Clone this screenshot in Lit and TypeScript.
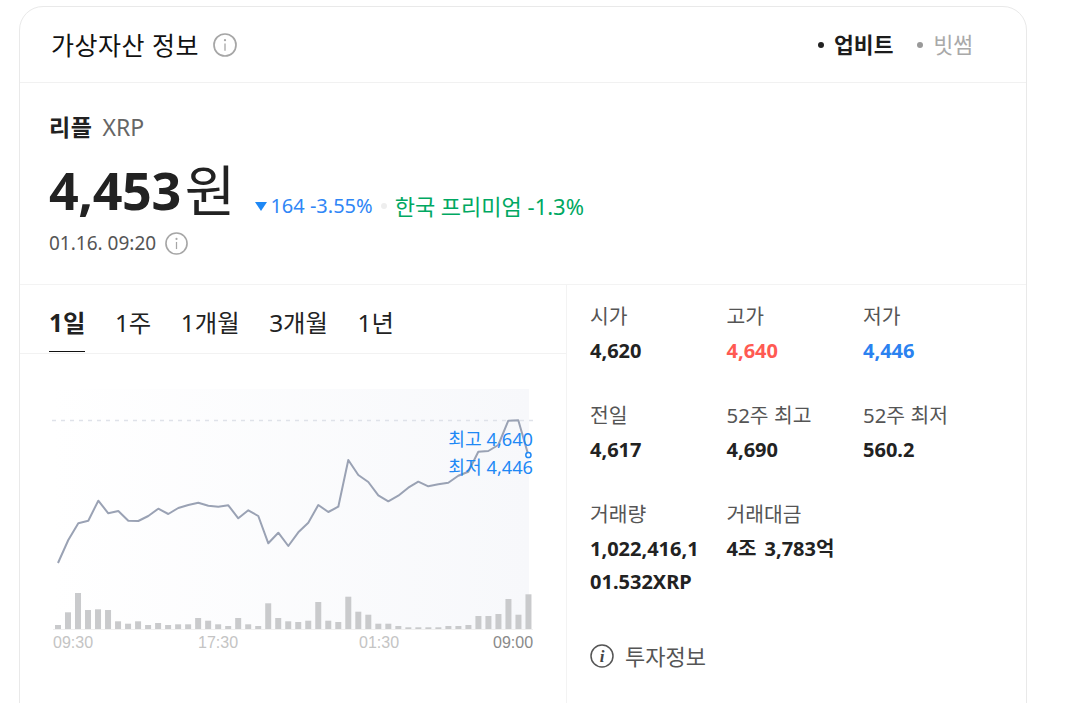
import { LitElement, html, css, svg } from "lit";
import { customElement } from "lit/decorators.js";

const LINE: [number, number][] = [
  [58, 563], [68.3, 540], [78.3, 523.3], [88.3, 520.7], [98.3, 500.7], [108.3, 513.3], [118.3, 511], [128.3, 520.7],
  [138.3, 521], [148.3, 516], [158.3, 508.7], [168.3, 514], [178.3, 508], [188.3, 505], [198.3, 502.7], [208.3, 505.7],
  [218.3, 506.7], [228.3, 505.3], [238.3, 518.3], [248.3, 510.3], [258.3, 516], [268.3, 543.3], [278.3, 532.7], [288.3, 546],
  [298.3, 532.3], [308.3, 522.7], [318.3, 505], [328.3, 512], [338.3, 506.7], [348.3, 460], [358.3, 475], [368.3, 482],
  [378.3, 495.3], [388.3, 501.3], [398.3, 495.7], [408.3, 487.7], [418.3, 481.7], [428.3, 486.3], [438.3, 484.3], [448.3, 482.7],
  [458.3, 475.7], [468.3, 471.7], [478.3, 451.7], [488.3, 451], [498.3, 445], [508.3, 420.7], [518.3, 420.3], [528.3, 455],
];
const BARS = [4, 16.7, 36, 19, 19.7, 19, 7.7, 5.3, 7.7, 4, 6, 4, 4.7, 4.7, 11, 8.3, 4.7, 3, 11, 4.7, 3, 25.7, 11, 7.7, 7, 8.3, 27, 8.3, 7, 32.3, 17.3, 14.3, 5.3, 5.3, 3, 1.7, 1.7, 1.7, 1.7, 3, 3, 4, 13, 13, 15, 30, 14.3, 34.7];

const STATS = [
  { label: "시가", value: "4,620" },
  { label: "고가", value: "4,640", tone: "up" },
  { label: "저가", value: "4,446", tone: "down" },
  { label: "전일", value: "4,617" },
  { label: "52주 최고", value: "4,690" },
  { label: "52주 최저", value: "560.2" },
  { label: "거래량", value: "1,022,416,101.532XRP" },
  { label: "거래대금", value: "4조 3,783억" },
];

const infoIcon = (size: number) => html`<svg class="info" width=${size} height=${size} viewBox="0 0 24 24" fill="none">
  <circle cx="12" cy="12" r="11" stroke="#a6a6a6" stroke-width="1.7"></circle>
  <circle cx="12" cy="7.2" r="1.1" fill="#a6a6a6"></circle>
  <path d="M12 10.4V17.8" stroke="#a6a6a6" stroke-width="1.3"></path>
</svg>`;

@customElement("app-root")
export class AppRoot extends LitElement {
  static styles = css`
    :host {
      display: block;
      height: 703px;
      overflow: hidden;
      background: #fff;
      font-family: "Noto Sans", "Noto Sans CJK KR", sans-serif;
      color: #222;
    }
    .card {
      box-sizing: border-box;
      width: 1008px;
      height: 760px;
      margin: 6px 0 0 19px;
      border: 1px solid #e9e9e9;
      border-radius: 24px;
    }
    .head {
      box-sizing: border-box;
      height: 76px;
      display: flex;
      align-items: center;
      padding: 0 53px 0 31px;
      border-bottom: 1px solid #f1f1f1;
    }
    .title {
      font-size: 25px;
      letter-spacing: 0.5px;
      line-height: 30px;
      color: #111;
    }
    .info { display: block; flex: none; }
    .head .info { margin-left: 14px; }
    .sources {
      margin-left: auto;
      display: flex;
      align-items: center;
      font-size: 21.5px;
      line-height: 26px;
      color: #a9a9a9;
    }
    .src { display: flex; align-items: center; gap: 10px; }
    .src + .src { margin-left: 24px; }
    .src i { width: 6px; height: 6px; border-radius: 50%; background: #999; }
    .src.on { color: #1c1c1c; font-weight: 700; }
    .src.on i { background: #222; }
    .summary {
      box-sizing: border-box;
      height: 202px;
      padding: 29px 29px 0;
      border-bottom: 1px solid #f3f3f3;
    }
    .name { font-size: 23px; line-height: 30px; color: #666; }
    .name b { color: #222; margin-right: 4px; letter-spacing: 0.6px; }
    .price-row { display: flex; align-items: flex-end; margin-top: 18px; height: 60px; }
    .num { font-size: 52px; line-height: 60px; font-weight: 700; letter-spacing: -0.4px; color: #222; }
    .won { font-size: 55px; line-height: 60px; margin-left: 4px; color: #222; }
    .delta {
      display: flex;
      align-items: center;
      font-size: 20px;
      line-height: 28px;
      margin: 0 0 0 20px;
      color: #2f86f6;
    }
    .tri { width: 0; height: 0; border: 6.5px solid transparent; border-top: 9px solid #1e88f5; border-bottom: 0; margin-right: 3px; }
    .sep { width: 6px; height: 6px; border-radius: 50%; background: #eee; margin: 0 8px; }
    .premium { color: #00a862; font-size: 22px; }
    .date-row {
      display: flex;
      align-items: center;
      gap: 9px;
      font-size: 19px;
      line-height: 24px;
      color: #555;
      margin-top: 11px;
    }
    .body { display: flex; }
    .left { width: 546px; flex: none; border-right: 1px solid #f3f3f3; min-height: 470px; }
    .tabs {
      box-sizing: border-box;
      height: 69px;
      display: flex;
      gap: 29.5px;
      padding-left: 29px;
      border-bottom: 1px solid #f2f2f2;
    }
    .tab {
      box-sizing: border-box;
      height: 67px;
      padding-top: 21px;
      font-size: 24.4px;
      line-height: 34px;
      color: #222;
    }
    .tab.on { font-weight: 700; border-bottom: 1px solid #111; }
    .chart { display: block; width: 546px; height: 350px; }
    .right { padding: 14px 0 0 23px; flex: 1; }
    .grid {
      display: grid;
      grid-template-columns: repeat(3, 136.5px);
      row-gap: 31px;
    }
    .stat { padding-right: 26px; }
    .stat .k { font-size: 20.4px; line-height: 34px; color: #555; }
    .stat .v {
      font-size: 20px;
      line-height: 33px;
      font-weight: 700;
      color: #222;
      word-break: break-all;
      word-spacing: 3px;
      margin-top: 1px;
    }
    .v.up { color: #ff5a52; }
    .v.down { color: #2b82f0; }
    .invest {
      display: flex;
      align-items: center;
      gap: 11px;
      margin-top: 44px;
      font-size: 22px;
      line-height: 28px;
      color: #555;
    }
    .invest text { font-family: "Liberation Serif", serif; }
  `;

  private chart() {
    const dx = 20;
    const dy = 354;
    const points = LINE.map(([x, y]) => `${x - dx},${y - dy}`).join(" ");
    const baseY = 629 - dy;
    return html`<svg class="chart" viewBox="0 0 546 350">
      <defs>
        <linearGradient id="fade" x1="0" x2="1" y1="0" y2="0">
          <stop offset="0" stop-color="#ffffff"></stop>
          <stop offset="1" stop-color="#f7f8fb"></stop>
        </linearGradient>
      </defs>
      <rect x="32" y="35" width="477" height="240" fill="url(#fade)"></rect>
      <line x1="32" x2="513" y1="66.5" y2="66.5" stroke="#dfe2e9" stroke-width="1.5" stroke-dasharray="4 5"></line>
      ${BARS.map((h, i) => svg`<rect x=${35 + i * 10.01} y=${baseY - h} width="6" height=${h} fill="#c9cacc"></rect>`)}
      <line x1="33" x2="513" y1=${baseY + 0.5} y2=${baseY + 0.5} stroke="#f0f0f0"></line>
      <polyline points=${points} fill="none" stroke="#9aa2b4" stroke-width="2" stroke-linejoin="round"></polyline>
      <g font-family="'Noto Sans','Noto Sans CJK KR',sans-serif" font-size="18.2" fill="#1e88f5" text-anchor="end">
        <text x="513" y="92">최고 4,640</text>
        <text x="513" y="120">최저 4,446</text>
      </g>
      <circle cx="508.4" cy="101" r="2.6" fill="#fff" stroke="#1e88f5" stroke-width="1.5"></circle>
      <g font-family="'Liberation Sans',Arial,sans-serif" font-size="16" fill="#c4c4c4">
        <text x="33" y="294">09:30</text>
        <text x="178" y="294">17:30</text>
        <text x="339" y="294">01:30</text>
        <text x="473" y="294" fill="#8a8a8a">09:00</text>
      </g>
    </svg>`;
  }

  render() {
    return html`<section class="card">
      <header class="head">
        <div class="title">가상자산 정보</div>
        ${infoIcon(24)}
        <div class="sources">
          <div class="src on"><i></i>업비트</div>
          <div class="src"><i></i>빗썸</div>
        </div>
      </header>
      <div class="summary">
        <div class="name"><b>리플</b> XRP</div>
        <div class="price-row">
          <span class="num">4,453</span><span class="won">원</span>
          <div class="delta">
            <span class="tri"></span>164 -3.55%
            <span class="sep"></span>
            <span class="premium">한국 프리미엄 -1.3%</span>
          </div>
        </div>
        <div class="date-row">01.16. 09:20 ${infoIcon(23)}</div>
      </div>
      <div class="body">
        <div class="left">
          <nav class="tabs">
            <div class="tab on">1일</div>
            <div class="tab">1주</div>
            <div class="tab">1개월</div>
            <div class="tab">3개월</div>
            <div class="tab">1년</div>
          </nav>
          ${this.chart()}
        </div>
        <div class="right">
          <div class="grid">
            ${STATS.map(
              (s) => html`<div class="stat">
                <div class="k">${s.label}</div>
                <div class="v ${s.tone ?? ""}">${s.value}</div>
              </div>`
            )}
          </div>
          <div class="invest">
            <svg width="24" height="24" viewBox="0 0 24 24" fill="none">
              <circle cx="12" cy="12" r="11" stroke="#555" stroke-width="1.5"></circle>
              <text x="12" y="18" text-anchor="middle" font-size="17" font-style="italic" font-weight="700" fill="#444">i</text>
            </svg>
            투자정보
          </div>
        </div>
      </div>
    </section>`;
  }
}
